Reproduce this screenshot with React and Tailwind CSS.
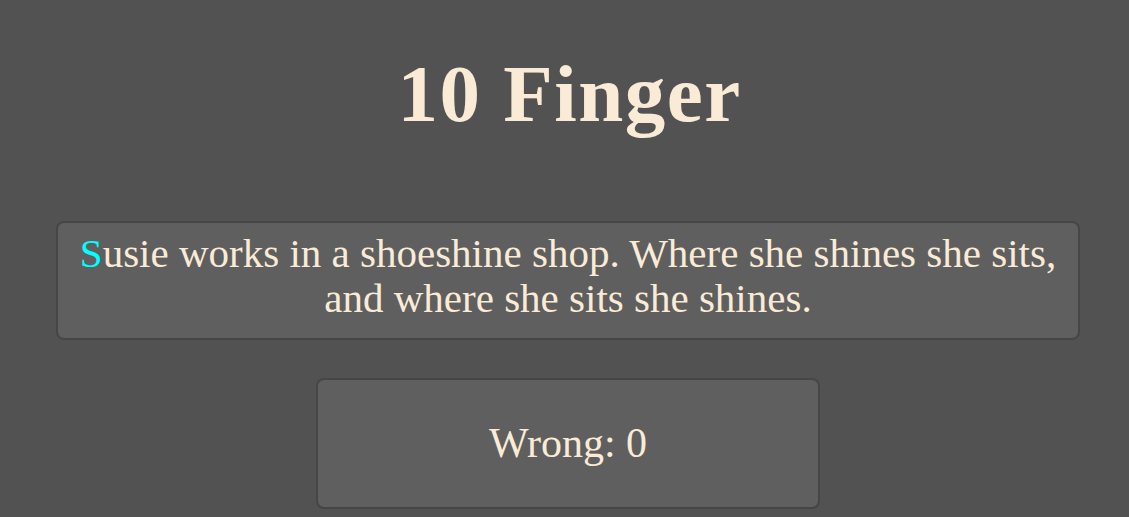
import React from "react";

const text =
  "Susie works in a shoeshine shop. Where she shines she sits, and where she sits she shines.";

export default function App() {
  const current = 0;
  return (
    <div
      className="min-h-[517px] w-full bg-[#525252] text-[#faebd7] overflow-hidden"
      style={{ fontFamily: '"Liberation Serif", "DejaVu Serif", serif' }}
    >
      {/* Title */}
      <h1 className="pt-[44px] pl-[10px] text-center text-[81px] leading-[100px] font-bold tracking-[1.5px]">
        10 Finger
      </h1>

      {/* Text to type */}
      <div className="mt-[77px] ml-[56px] w-[1024px] rounded-lg border-2 border-[#464646] bg-[#5f5f5f] px-4 pt-[8px] pb-[17px] text-center text-[41px] leading-[45px]">
        <span className="text-[#00ffff]">{text[current]}</span>
        {text.slice(current + 1)}
      </div>

      {/* Counter */}
      <div className="mt-[38px] ml-[316px] flex h-[131px] w-[504px] items-center justify-center rounded-lg border-2 border-[#464646] bg-[#5f5f5f] text-[42px]">
        Wrong: 0
      </div>
    </div>
  );
}
